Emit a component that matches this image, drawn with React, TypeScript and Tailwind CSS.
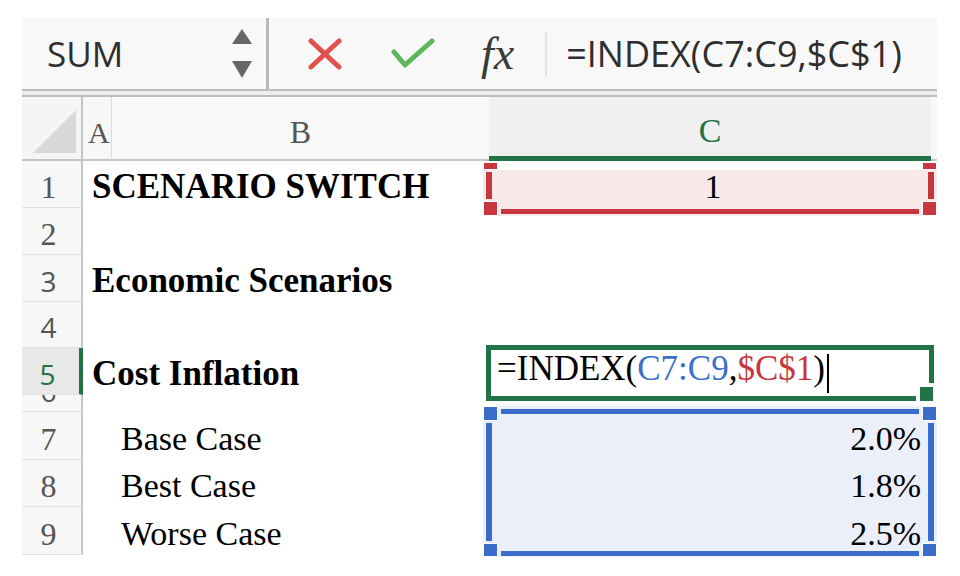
import React from 'react'

type Row = {
  n: string
  h: string
  label?: string
  bold?: boolean
  indent?: boolean
  value?: string
  center?: boolean
  sans?: boolean
  active?: boolean
}

const rows: Row[] = [
  { n: '1', h: 'h-[47px]', label: 'SCENARIO SWITCH', bold: true, value: '1', center: true },
  { n: '2', h: 'h-[47px]' },
  { n: '3', h: 'h-[47px]', label: 'Economic Scenarios', bold: true, sans: true },
  { n: '4', h: 'h-[46px]', sans: true },
  { n: '5', h: 'h-[47px]', label: 'Cost Inflation', bold: true, sans: true, active: true },
  { n: '6', h: 'h-[17px]', sans: true },
  { n: '7', h: 'h-[48px]', label: 'Base Case', indent: true, value: '2.0%' },
  { n: '8', h: 'h-[47px]', label: 'Best Case', indent: true, value: '1.8%' },
  { n: '9', h: 'h-[48px]', label: 'Worse Case', indent: true, value: '2.5%' },
]

function FormulaBar() {
  return (
    <div className="ml-[22px] mt-[18px] w-[915px] h-[71px] bg-[#f8f8f8] flex items-center font-['Open_Sans',sans-serif] text-[#2e2e2e]">
      <div className="w-[244px] h-full flex items-center">
        <span className="pl-[25px] text-[35px] leading-none">SUM</span>
        <svg className="ml-auto mr-[14px]" width="20" height="50" viewBox="0 0 20 50">
          <polygon points="10,0 20,15 0,15" fill="#666" />
          <polygon points="0,32 20,32 10,49" fill="#666" />
        </svg>
      </div>
      <div className="w-[3px] self-stretch bg-[#b9b9b9]" />
      <svg className="ml-[39px]" width="34" height="32" viewBox="0 0 34 32">
        <path d="M3 3 L31 29 M31 3 L3 29" stroke="#e2504b" strokeWidth="5" strokeLinecap="round" />
      </svg>
      <svg className="ml-[49px]" width="44" height="32" viewBox="0 0 44 32">
        <path d="M3 14 L14 27 L41 3" stroke="#5db65a" strokeWidth="5" fill="none" strokeLinecap="round" strokeLinejoin="round" />
      </svg>
      <span className="ml-[46px] font-['Liberation_Serif',serif] italic text-[46px] leading-none text-[#3a3a3a]">fx</span>
      <div className="ml-[31px] w-[2px] h-[44px] bg-[#e2e2e2]" />
      <span className="ml-[19px] text-[36px] leading-none">=INDEX(C7:C9,$C$1)</span>
    </div>
  )
}

function HeaderRow() {
  return (
    <div className="flex h-[64px] font-['Liberation_Serif',serif] leading-none">
      <div className="w-[61px] shrink-0 bg-[#f5f5f5] border-r-2 border-b-2 border-[#c4c4c4]">
        <svg width="59" height="62" viewBox="0 0 59 62">
          <polygon points="54,13 54,56 11,56" fill="#d8d8d8" />
        </svg>
      </div>
      <div className="w-[29px] shrink-0 bg-[#f7f7f7] border-r border-r-[#dcdcdc] border-b-2 border-b-[#c6c6c6] flex items-end pl-[5px] pb-[11px] text-[30px] text-[#555]">
        A
      </div>
      <div className="w-[377px] shrink-0 bg-[#f8f8f8] border-b-2 border-[#c6c6c6] flex items-end justify-center pb-[11px] text-[32px] text-[#555]">
        B
      </div>
      <div className="w-[442px] shrink-0 bg-[#f0f0f0] border-b-[5px] border-[#217346] flex items-end justify-center pb-[8px] text-[34px] text-[#217346]">
        C
      </div>
      <div className="w-[6px] shrink-0 bg-[#f8f8f8] border-b-2 border-[#c6c6c6]" />
    </div>
  )
}

function DataRow({ row }: { row: Row }) {
  const headCls = row.active
    ? 'bg-[#e8e8e8] border-r-[4px] border-r-[#217346] text-[#217346]'
    : 'bg-[#f7f7f7] border-r-2 border-r-[#c4c4c4] text-[#555]'
  const numFont = row.sans
    ? "font-['Open_Sans',sans-serif] text-[28px] pb-[6px]"
    : "font-['Liberation_Serif',serif] text-[32px] pb-[4px]"
  return (
    <div className={`flex ${row.h} leading-none`}>
      <div
        className={`w-[61px] shrink-0 border-b border-b-[#e2e2e2] flex items-end justify-center pr-[6px] overflow-hidden ${headCls} ${numFont}`}
      >
        {row.n}
      </div>
      <div
        className={`w-[406px] shrink-0 flex items-end pb-[4px] whitespace-nowrap text-black font-['Liberation_Serif',serif] ${
          row.indent ? 'pl-[38px] text-[34px]' : 'pl-[9px] text-[35px]'
        } ${row.bold ? 'font-bold' : ''}`}
      >
        {row.label}
      </div>
      <div
        className={`w-[448px] shrink-0 flex items-end pb-[4px] text-[34px] text-black font-['Liberation_Serif',serif] ${
          row.center ? 'justify-center' : 'justify-end pr-[16px]'
        }`}
      >
        {row.value}
      </div>
    </div>
  )
}

// Excel-style reference range: corner handles, broken edges, tinted inside.
function RangeBox({
  className,
  handle,
  fill,
  topEdge,
}: {
  className: string
  handle: string
  fill: string
  topEdge: boolean
}) {
  return (
    <div className={`absolute -z-10 grid grid-cols-[15px_1fr_15px] ${fill} ${className}`}>
      <div className="bg-white p-px">
        <div className={`h-full ${handle}`} />
      </div>
      <div className={`px-[3px] pt-[3px] ${topEdge ? '' : 'bg-white'}`}>
        {topEdge && <div className={`h-[5px] ${handle}`} />}
      </div>
      <div className="bg-white p-px">
        <div className={`h-full ${handle}`} />
      </div>

      <div className="flex py-[2px] pl-[3px]">
        <div className={`w-[6px] ${handle}`} />
      </div>
      <div />
      <div className="flex py-[2px] pl-[6px]">
        <div className={`w-[6px] ${handle}`} />
      </div>

      <div className="bg-white p-px">
        <div className={`h-full ${handle}`} />
      </div>
      <div className="px-[3px] pt-[8px]">
        <div className={`h-[5px] ${handle}`} />
      </div>
      <div className="bg-white p-px">
        <div className={`h-full ${handle}`} />
      </div>
    </div>
  )
}

function CellEditor() {
  return (
    <div className="absolute left-[486px] top-[345px] w-[448px] h-[56px] border-[5px] border-[#217346] bg-white flex items-end pl-[6px] font-['Liberation_Serif',serif] text-[35px] leading-none text-black">
      <span className="pb-[10px] whitespace-nowrap">
        =INDEX(<span className="text-[#3a70c9]">C7:C9</span>,<span className="text-[#c8363e]">$C$1</span>)
      </span>
      <div className="ml-[2px] mb-[3px] w-[2px] h-[39px] bg-black" />
      <div className="absolute -right-[5px] -bottom-[5px] w-[18px] h-[18px] bg-white p-[4px] pb-0 pr-[1px]">
        <div className="w-full h-full bg-[#217346]" />
      </div>
    </div>
  )
}

export default function App() {
  return (
    <div className="relative isolate w-[960px] h-[576px] bg-white overflow-hidden">
      <FormulaBar />
      <div className="ml-[22px] w-[915px] h-[8px] border-t-2 border-b-2 border-[#bdbdbd] bg-[#ececec]" />
      <div className="ml-[22px] w-[915px]">
        <HeaderRow />
        {rows.map((r) => (
          <DataRow key={r.n} row={r} />
        ))}
      </div>

      <RangeBox
        className="left-[483px] top-[162px] w-[454px] h-[54px] grid-rows-[8px_1fr_15px]"
        handle="bg-[#c8363e]"
        fill="bg-[#f8e9e9]"
        topEdge={false}
      />
      <RangeBox
        className="left-[483px] top-[406px] w-[454px] h-[151px] grid-rows-[15px_1fr_14px]"
        handle="bg-[#3a6cc9]"
        fill="bg-[#eaeff9]"
        topEdge
      />
      <CellEditor />
    </div>
  )
}
